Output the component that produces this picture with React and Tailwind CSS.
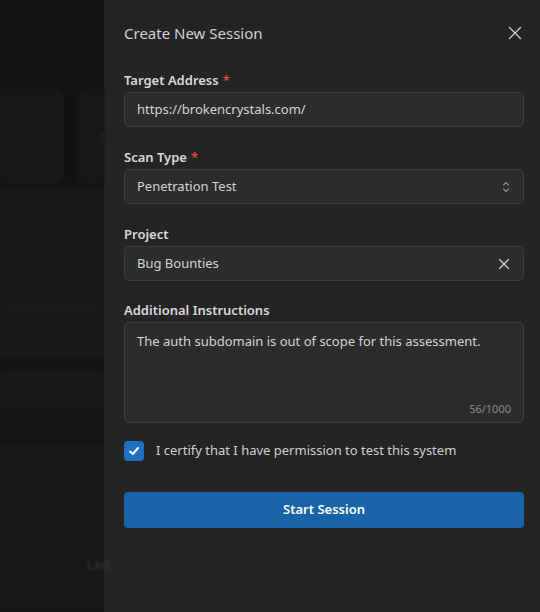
import React from "react";

const font = { fontFamily: '"Noto Sans", "Open Sans", sans-serif' };

function Label({ children, required }) {
  return (
    <div className="text-[13px] leading-[18px] font-semibold text-[#dadada] mb-[3px]">
      {children}
      {required && <span className="text-[#e5484d] ml-[4px]">*</span>}
    </div>
  );
}

export default function App() {
  return (
    <div className="w-[540px] h-[612px] flex bg-[#121212] overflow-hidden" style={font}>
      {/* blurred background dashboard */}
      <div className="w-[104px] h-full flex flex-col bg-[#111111] blur-[1px]">
        <div className="h-[89px]" />
        <div className="flex gap-[13px] h-[95px]">
          <div className="w-[64px] shrink-0 rounded-r-[8px] bg-[#161616]" />
          <div className="flex-1 rounded-l-[8px] bg-[#161616] flex items-center">
            <span className="text-[#333] text-[12px] ml-[24px]">(</span>
          </div>
        </div>
        <div className="h-[88px] bg-[#171717] mt-[2px]" />
        <div className="h-[31px] bg-[#181818] border-t border-[#1b1b1b]" />
        <div className="h-[54px] bg-[#181818] border-t border-[#1b1b1b]" />
        <div className="h-[11px] bg-[#121212]" />
        <div className="h-[35px] bg-[#171717]" />
        <div className="h-[40px] bg-[#141414] border-t border-[#1a1a1a]" />
        <div className="flex-1 bg-[#171717] flex flex-col">
          <div className="h-[108px]" />
          <div className="h-[24px] flex items-center justify-end">
            <span className="text-[12px] text-[#3a3a3a] -mr-[6px]">Last</span>
          </div>
          <div className="flex-1 border-t border-[#1b1b1b] mt-[8px]" />
        </div>
      </div>

      {/* drawer panel */}
      <div className="w-[436px] h-full bg-[#242424] border-l border-[#2f2f2f] pl-[19px] pr-[16px] pt-[23px] flex flex-col">
        <div className="flex items-center justify-between h-[20px]">
          <div className="text-[15px] leading-[20px] text-[#d2d2d2]">Create New Session</div>
          <svg width="14" height="14" viewBox="0 0 14 14" className="mr-[2px]" fill="none" stroke="#cfcfcf" strokeWidth="1.3" strokeLinecap="round">
            <path d="M1.5 1.5 L12.5 12.5 M12.5 1.5 L1.5 12.5" />
          </svg>
        </div>

        <div className="mt-[28px]">
          <Label required>Target Address</Label>
          <div className="h-[35px] rounded-[5px] border border-[#3d3d3d] bg-[#2c2c2c] flex items-center px-[12px] text-[13px] text-[#d4d4d4]">
            https://brokencrystals.com/
          </div>
        </div>

        <div className="mt-[21px]">
          <Label required>Scan Type</Label>
          <div className="h-[35px] rounded-[5px] border border-[#3d3d3d] bg-[#2c2c2c] flex items-center justify-between px-[12px] text-[13px] text-[#d4d4d4]">
            <span>Penetration Test</span>
            <svg width="10" height="14" viewBox="0 0 10 14" fill="none" stroke="#8f8f8f" strokeWidth="1.1" strokeLinecap="round" strokeLinejoin="round">
              <path d="M2.5 5 L5 2.5 L7.5 5" />
              <path d="M2.5 9 L5 11.5 L7.5 9" />
            </svg>
          </div>
        </div>

        <div className="mt-[21px]">
          <Label>Project</Label>
          <div className="h-[35px] rounded-[5px] border border-[#3d3d3d] bg-[#2c2c2c] flex items-center justify-between px-[12px] text-[13px] text-[#d4d4d4]">
            <span>Bug Bounties</span>
            <svg width="12" height="12" viewBox="0 0 12 12" className="mr-[1px]" fill="none" stroke="#cfcfcf" strokeWidth="1.3" strokeLinecap="round">
              <path d="M1.5 1.5 L10.5 10.5 M10.5 1.5 L1.5 10.5" />
            </svg>
          </div>
        </div>

        <div className="mt-[20px]">
          <Label>Additional Instructions</Label>
          <div className="h-[101px] rounded-[5px] border border-[#3d3d3d] bg-[#2c2c2c] flex flex-col justify-between px-[12px] pt-[8px] pb-[5px] text-[13px] text-[#d4d4d4]">
            <span className="leading-[20px]">The auth subdomain is out of scope for this assessment.</span>
            <span className="self-end text-[11px] text-[#8a8a8a]">56/1000</span>
          </div>
        </div>

        <div className="mt-[18px] flex items-center gap-[12px]">
          <div className="w-[20px] h-[20px] rounded-[4px] bg-[#1f6fc5] flex items-center justify-center">
            <svg width="12" height="12" viewBox="0 0 12 12" fill="none" stroke="#ffffff" strokeWidth="2" strokeLinecap="round" strokeLinejoin="round">
              <path d="M2 6.5 L4.8 9 L10 3" />
            </svg>
          </div>
          <span className="text-[13px] text-[#d0d0d0]">I certify that I have permission to test this system</span>
        </div>

        <div className="mt-[31px] h-[36px] rounded-[4px] bg-[#1963aa] flex items-center justify-center text-[13px] font-semibold text-white">
          Start Session
        </div>
      </div>
    </div>
  );
}
